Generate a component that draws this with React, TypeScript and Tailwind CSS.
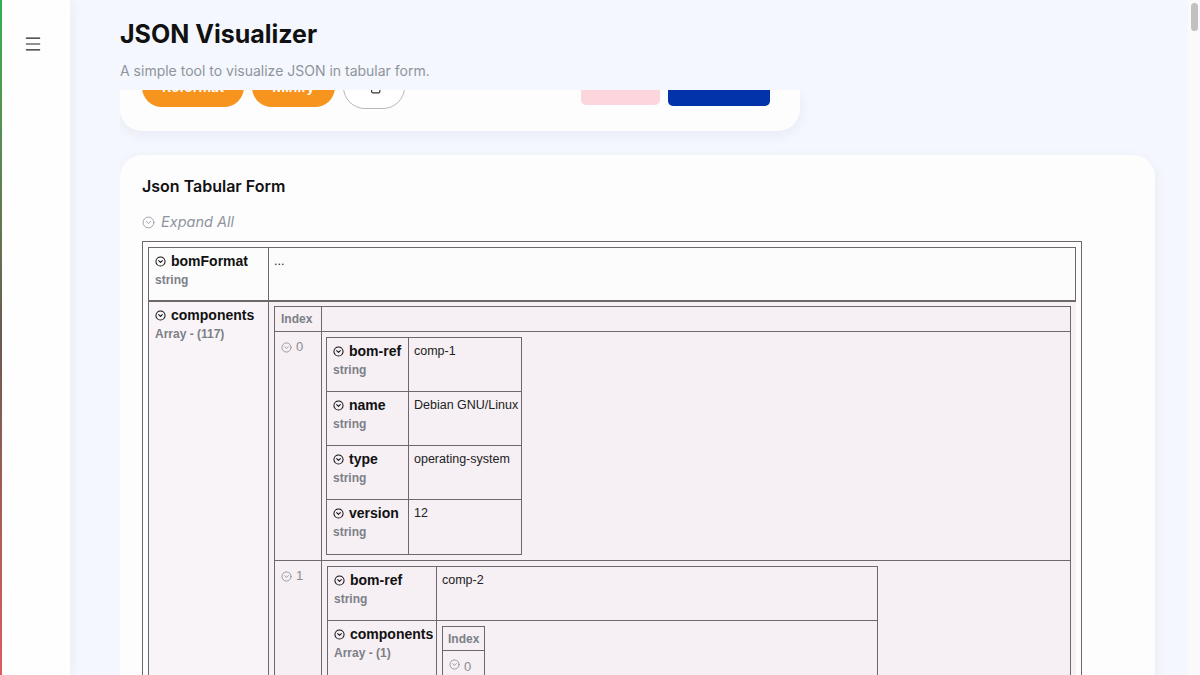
import { Menu, CircleChevronDown, Copy } from "lucide-react";

const line = "border-[#6e686c]";

function KeyCell({ name, type, w }: { name: string; type: string; w: string }) {
  return (
    <div className={`${w} shrink-0 border-r ${line} px-[6px] pt-[5px]`}>
      <div className="flex items-center gap-[5px] whitespace-nowrap text-[14px] font-bold leading-[17px] text-[#111]">
        <CircleChevronDown size={11} strokeWidth={2.2} className="shrink-0" />
        <span>{name}</span>
      </div>
      <div className="mt-[2px] whitespace-nowrap text-[12px] font-bold leading-[17px] text-[#7c8087]">{type}</div>
    </div>
  );
}

function Value({ children }: { children: React.ReactNode }) {
  return <div className="flex-1 whitespace-nowrap px-[5px] pt-[5px] text-[12.5px] leading-[16px] text-[#222]">{children}</div>;
}

function IndexCell({ i }: { i: number }) {
  return (
    <div className={`w-[47px] shrink-0 border-r ${line} pl-[6px] pt-[7px]`}>
      <div className="flex items-center gap-[4px] text-[13px] leading-[16px] text-[#8a8d92]">
        <CircleChevronDown size={11} strokeWidth={1.8} />
        <span>{i}</span>
      </div>
    </div>
  );
}

export default function App() {
  return (
    <div className="flex h-[675px] w-[1200px] overflow-hidden bg-[#f4f7fd] font-['Inter',sans-serif]">
      {/* sidebar */}
      <div className="flex w-[70px] shrink-0 bg-[#fefefe] shadow-[2px_0_10px_rgba(30,40,80,0.05)]">
        <div className="w-[2px] bg-gradient-to-b from-[#2bb24c] via-[#6a5a50] to-[#e05a5a]" />
        <div className="flex-1 pl-[21px] pt-[34px]">
          <Menu size={20} strokeWidth={1.4} className="text-[#222]" />
        </div>
      </div>

      {/* main */}
      <div className="flex flex-1 flex-col pl-[50px]">
        <div className="h-[90px] shrink-0 pt-[18px]">
          <h1 className="text-[25px] font-bold leading-[32px] text-[#111]">JSON Visualizer</h1>
          <p className="mt-[11px] text-[14px] leading-[20px] text-[#8f949c]">A simple tool to visualize JSON in tabular form.</p>
        </div>

        <div className="flex-1 overflow-hidden">
          {/* input card, scrolled mostly out of view */}
          <div className="w-[680px] overflow-hidden rounded-b-[22px] bg-[#fdfdfe] pb-[22px] pl-[22px] pr-[30px] shadow-[0_4px_14px_rgba(30,40,80,0.06)]">
            <div className="-mt-[25px] flex h-[44px] items-center">
              <div className="flex h-[40px] w-[102px] items-start justify-center rounded-full bg-[#f7941d] pt-[12px] text-[14px] font-semibold leading-[16px] text-white">Reformat</div>
              <div className="ml-[8px] flex h-[40px] w-[83px] items-start justify-center rounded-full bg-[#f7941d] pt-[12px] text-[14px] font-semibold leading-[16px] text-white">Minify</div>
              <div className="ml-[8px] flex h-[44px] w-[62px] items-center justify-center rounded-full border border-[#b9b9bd] bg-white text-[#333]">
                <Copy size={14} strokeWidth={2} />
              </div>
              <div className="ml-auto h-[36px] w-[79px] rounded-[5px] bg-[#fdd5dc]" />
              <div className="ml-[8px] flex h-[38px] w-[102px] items-start justify-center rounded-[5px] bg-[#0333a8] pt-[9px] text-[14px] leading-[16px] text-white">Visualize</div>
            </div>
          </div>

          {/* table card */}
          <div className="mt-[24px] w-[1035px] rounded-[22px] bg-[#fdfdfe] px-[22px] pb-8 pt-[20px] shadow-[0_4px_14px_rgba(30,40,80,0.06)]">
            <h2 className="text-[16px] font-semibold leading-[22px] text-[#111]">Json Tabular Form</h2>
            <div className="mt-[15px] flex items-center gap-[6px] text-[#8f949c]">
              <CircleChevronDown size={13} strokeWidth={1.6} />
              <span className="text-[14.5px] italic leading-[20px]">Expand All</span>
            </div>

            <div className={`mt-[9px] w-[940px] border ${line} p-[5px] font-['Liberation_Sans',Arial,sans-serif]`}>
              <div className={`border ${line}`}>
                {/* bomFormat */}
                <div className={`flex h-[54px] border-b-2 ${line} bg-[#fdfcfd]`}>
                  <KeyCell name="bomFormat" type="string" w="w-[120px]" />
                  <Value>...</Value>
                </div>

                {/* components */}
                <div className="flex bg-[#f8f4f7]">
                  <KeyCell name="components" type="Array - (117)" w="w-[120px]" />
                  <div className="flex-1 bg-[#f7f1f5] p-[4px_5px_5px_5px]">
                    <div className={`w-[797px] border ${line} bg-[#f6eff4]`}>
                      <div className={`flex h-[25px] border-b ${line}`}>
                        <div className={`flex w-[47px] items-center border-r ${line} pl-[6px] text-[12px] font-bold text-[#7c8087]`}>Index</div>
                        <div className="flex-1" />
                      </div>

                      {/* item 0 */}
                      <div className={`flex border-b ${line}`}>
                        <IndexCell i={0} />
                        <div className="p-[5px] pl-[4px]">
                          <div className={`w-[196px] border ${line}`}>
                            {[
                              ["bom-ref", "comp-1"],
                              ["name", "Debian GNU/Linux"],
                              ["type", "operating-system"],
                              ["version", "12"],
                            ].map(([k, v], idx) => (
                              <div key={k} className={`flex h-[54px] ${idx < 3 ? `border-b ${line}` : ""}`}>
                                <KeyCell name={k} type="string" w="w-[82px]" />
                                <Value>{v}</Value>
                              </div>
                            ))}
                          </div>
                        </div>
                      </div>

                      {/* item 1 */}
                      <div className="flex">
                        <IndexCell i={1} />
                        <div className="p-[5px]">
                          <div className={`w-[551px] border ${line}`}>
                            <div className={`flex h-[54px] border-b ${line}`}>
                              <KeyCell name="bom-ref" type="string" w="w-[109px]" />
                              <Value>comp-2</Value>
                            </div>
                            <div className={`flex border-b ${line}`}>
                              <KeyCell name="components" type="Array - (1)" w="w-[109px]" />
                              <div className="flex-1 p-[5px]">
                                <div className={`w-[43px] border ${line}`}>
                                  <div className={`flex h-[24px] items-center border-b ${line} pl-[5px] text-[12px] font-bold text-[#7c8087]`}>Index</div>
                                  <div className="flex h-[80px] items-start gap-[4px] pl-[6px] pt-[6px] text-[13px] text-[#8a8d92]">
                                    <CircleChevronDown size={11} strokeWidth={1.8} className="mt-[2px]" />
                                    <span>0</span>
                                  </div>
                                </div>
                              </div>
                            </div>
                            <div className="flex h-[54px]">
                              <KeyCell name="name" type="string" w="w-[109px]" />
                              <Value>Debian base-files</Value>
                            </div>
                          </div>
                        </div>
                      </div>
                    </div>
                  </div>
                </div>
              </div>
            </div>
          </div>
        </div>
      </div>

      {/* scrollbar */}
      <div className="w-[12px] shrink-0 bg-[#fafafa] pt-[3px]">
        <div className="mx-auto h-[28px] w-[7px] rounded-full bg-[#c1c1c1]" />
      </div>
    </div>
  );
}
